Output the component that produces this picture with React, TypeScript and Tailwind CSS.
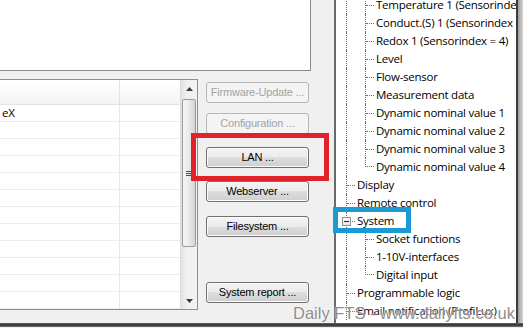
type Guide = "pipe" | "tee" | "elbow";

const treeRows: { text: string; guides: Guide[]; expander?: boolean }[] = [
  { text: "Temperature 1 (Sensorindex = 1)", guides: ["pipe", "tee"] },
  { text: "Conduct.(S) 1 (Sensorindex = 3)", guides: ["pipe", "tee"] },
  { text: "Redox 1 (Sensorindex = 4)", guides: ["pipe", "tee"] },
  { text: "Level", guides: ["pipe", "tee"] },
  { text: "Flow-sensor", guides: ["pipe", "tee"] },
  { text: "Measurement data", guides: ["pipe", "tee"] },
  { text: "Dynamic nominal value 1", guides: ["pipe", "tee"] },
  { text: "Dynamic nominal value 2", guides: ["pipe", "tee"] },
  { text: "Dynamic nominal value 3", guides: ["pipe", "tee"] },
  { text: "Dynamic nominal value 4", guides: ["pipe", "elbow"] },
  { text: "Display", guides: ["tee"] },
  { text: "Remote control", guides: ["tee"] },
  { text: "System", guides: ["tee"], expander: true },
  { text: "Socket functions", guides: ["pipe", "tee"] },
  { text: "1-10V-interfaces", guides: ["pipe", "tee"] },
  { text: "Digital input", guides: ["pipe", "elbow"] },
  { text: "Programmable logic", guides: ["tee"] },
  { text: "Email notification (ProfiLux)", guides: ["tee"] },
];

const listRows = ["eX", "", "", "", "", "", "", "", "", "", "", ""];

function GuideCell({ kind, expander }: { kind: Guide; expander?: boolean }) {
  const line = "border-dotted border-[#6e6e6e]";
  return (
    <div className="relative w-[19px] h-full shrink-0 pl-[10px] flex">
      {kind === "pipe" && <div className={`h-full border-l ${line}`} />}
      {kind === "tee" && (
        <div className={`h-full w-full border-l ${line} flex items-center`}>
          <div className={`w-full border-t ${line}`} />
        </div>
      )}
      {kind === "elbow" && <div className={`h-[9px] w-full border-l border-b ${line}`} />}
      {expander && (
        <div className="absolute left-[6px] top-[5px] w-[9px] h-[9px] border border-[#929292] bg-[linear-gradient(#ffffff,#e4e4e4)] flex items-center justify-center">
          <div className="w-[5px] h-px bg-[#222]" />
        </div>
      )}
    </div>
  );
}

function WinButton({
  label,
  disabled,
  className,
}: {
  label: string;
  disabled?: boolean;
  className?: string;
}) {
  return (
    <div
      className={`h-[21px] w-[103px] shrink-0 rounded-[3px] border flex items-center justify-center text-[11px] tracking-[-0.2px] font-['Liberation_Sans',Arial,sans-serif] ${
        disabled
          ? "border-[#b7b7b7] bg-[#f4f4f4] text-[#a3a3a3]"
          : "border-[#707070] bg-[linear-gradient(#f3f3f3,#ebebeb_50%,#dddddd_50%,#cfcfcf)] text-black shadow-[inset_0_0_0_1px_#fbfbfb]"
      } ${className ?? ""}`}
    >
      {label}
    </div>
  );
}

function Scrollbar() {
  return (
    <div className="w-[17px] h-full flex flex-col bg-[linear-gradient(to_right,#e2e2e2,#f0f0f0_35%,#f2f2f2)] border-l border-[#dcdcdc]">
      <div className="h-[17px] flex items-center justify-center">
        <svg width="7" height="4" viewBox="0 0 7 4">
          <path d="M0 4 L3.5 0 L7 4 Z" fill="#3a3a3a" />
        </svg>
      </div>
      <div className="mt-[2px] mx-px h-[148px] rounded-[2px] border border-[#9a9a9a] bg-[linear-gradient(to_right,#f6f6f6,#e9e9e9_50%,#d4d4d4)] flex items-center justify-center">
        <svg width="7" height="5" viewBox="0 0 7 5">
          <path d="M0 0.5 H7 M0 2.5 H7 M0 4.5 H7" stroke="#4a4a4a" strokeWidth="1" />
        </svg>
      </div>
      <div className="flex-1" />
      <div className="h-[17px] flex items-center justify-center">
        <svg width="7" height="4" viewBox="0 0 7 4">
          <path d="M0 0 L7 0 L3.5 4 Z" fill="#3a3a3a" />
        </svg>
      </div>
    </div>
  );
}

export default function App() {
  return (
    <div className="relative w-[523px] h-[328px] overflow-hidden bg-[#e8e8e8] font-['Open_Sans','Noto_Sans',sans-serif]">
      <div className="flex h-[323px]">
        {/* Left: panel, list and buttons */}
        <div className="w-[334px] h-full flex flex-col bg-[#f0f0f0]">
          <div className="w-[311px] h-[71px] shrink-0 bg-white border-r border-b border-[#8a8a8a]" />

          <div className="flex mt-[8px]">
            <div className="w-[198px] h-[231px] flex border-t border-r border-b border-[#8e8e8e] bg-white">
              <div className="w-[180px] h-full flex flex-col overflow-hidden">
                <div className="h-[25px] shrink-0 flex border-b border-[#e3e3e3] bg-[linear-gradient(#ffffff,#f3f4f6)]">
                  <div className="w-[120px] border-r border-[#e3e3e3]" />
                </div>
                {listRows.map((r, i) => (
                  <div key={i} className="h-[17px] shrink-0 flex border-b border-[#eeeeee] text-[11.5px] tracking-[-0.25px] text-black">
                    <div className="w-[120px] border-r border-[#e8e8e8] pl-[2px] leading-[16px] whitespace-nowrap">
                      {r}
                    </div>
                  </div>
                ))}
              </div>
              <Scrollbar />
            </div>

            <div className="ml-[8px] pt-[3px] flex flex-col">
              <WinButton label="Firmware-Update ..." disabled />
              <WinButton label="Configuration ..." disabled className="mt-[10px]" />
              <WinButton label="LAN ..." className="mt-[13px]" />
              <WinButton label="Webserver ..." className="mt-[13px]" />
              <WinButton label="Filesystem ..." className="mt-[14px]" />
              <WinButton label="System report ..." className="mt-[45px]" />
            </div>
          </div>
        </div>

        {/* Right: tree view */}
        <div className="w-[184px] h-full bg-white border-l-2 border-l-[#6a6a6a] border-r-2 border-r-[#3c3c3c] overflow-hidden">
          <div className="-mt-[4px] flex flex-col">
            {treeRows.map((row) => (
              <div key={row.text} className="h-[18px] shrink-0 flex">
                {row.guides.map((g, i) => (
                  <GuideCell key={i} kind={g} expander={row.expander && i === 0} />
                ))}
                <span className="pl-[2px] text-[11.5px] tracking-[-0.25px] leading-[18px] text-black whitespace-nowrap">
                  {row.text}
                </span>
              </div>
            ))}
          </div>
        </div>

        <div className="w-[5px] h-full bg-[linear-gradient(to_right,#9c9c9c,#d8d8d8)]" />
      </div>
      <div className="h-[4px] bg-[linear-gradient(#666,#2e2e2e_50%,#7a7a7a)]" />
      <div className="h-px bg-[#ededed]" />

      {/* Annotations */}
      <div className="absolute left-[191px] top-[133px] w-[138px] h-[48px] border-[5px] border-[#e1222b]" />
      <div className="absolute left-[333px] top-[207px] w-[78px] h-[26px] border-[5px] border-[#1b9ad6]" />

      {/* Watermark */}
      <div className="absolute left-[293px] top-[305px] text-[16.5px] leading-none whitespace-nowrap text-[#8f8f8f] font-['Liberation_Sans',Arial,sans-serif] [text-shadow:0_0_2px_#ffffff]">
        Daily FTS - www.dailyfts.co.uk
      </div>
    </div>
  );
}
